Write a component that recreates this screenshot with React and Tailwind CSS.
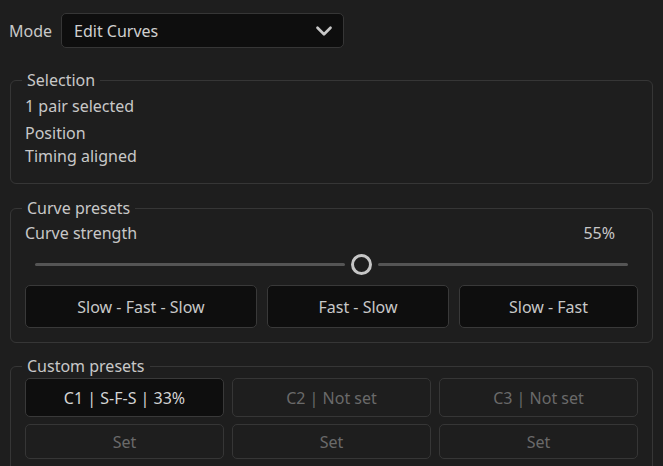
import { ChevronDown } from "lucide-react";

const font = { fontFamily: '"Noto Sans", "Liberation Sans", sans-serif' };

const Group = ({ title, className = "", children }) => (
  <fieldset
    className={`border border-[#363636] rounded-md mx-[10px] px-[14px] ${className}`}
  >
    <legend className="-ml-[3px] px-[5px] text-[16px] leading-[18px] text-[#c8c8c8]">
      {title}
    </legend>
    {children}
  </fieldset>
);

const PresetButton = ({ children, className = "" }) => (
  <button
    className={`h-[43px] rounded-[5px] border border-[#393939] bg-[#0e0e0e] text-[16px] text-[#c8c8c8] ${className}`}
  >
    {children}
  </button>
);

const SlotButton = ({ children, active, className = "" }) => (
  <button
    className={`rounded-[5px] border text-[16px] ${
      active
        ? "border-[#393939] bg-[#0e0e0e] text-[#d4d4d4]"
        : "border-[#363636] bg-[#1e1e1e] text-[#6a6a6a]"
    } ${className}`}
  >
    {children}
  </button>
);

export default function App() {
  const strength = 55;

  return (
    <div
      className="w-[663px] h-[466px] overflow-hidden bg-[#1e1e1e] text-[#c8c8c8]"
      style={font}
    >
      {/* Mode */}
      <div className="flex items-center gap-[9px] pl-[9px] pt-[13px]">
        <span className="text-[16px]">Mode</span>
        <button className="flex items-center justify-between w-[283px] h-[35px] pl-[12px] pr-[6px] rounded-[5px] border border-[#363636] bg-[#0e0e0e] text-[16px] text-[#d0d0d0]">
          <span>Edit Curves</span>
          <ChevronDown size={26} strokeWidth={2.5} className="text-[#c8c8c8]" />
        </button>
      </div>

      {/* Selection */}
      <Group title="Selection" className="mt-[23px] h-[113px]">
        <div className="text-[16px] leading-[22px] pt-[6px]">1 pair selected</div>
        <div className="text-[16px] leading-[22px] mt-[5px]">Position</div>
        <div className="text-[16px] leading-[22px] mt-[1px]">Timing aligned</div>
      </Group>

      {/* Curve presets */}
      <Group title="Curve presets" className="mt-[15px] h-[144px]">
        <div className="flex justify-between text-[16px] leading-[20px] pt-[6px] pr-[23px]">
          <span>Curve strength</span>
          <span>{strength}%</span>
        </div>
        <div className="flex items-center h-[22px] mt-[10px] px-[10px]">
          <div className="w-[310px] h-[3px] bg-[#555555] rounded-full" />
          <div className="mx-[6px] w-[21px] h-[21px] rounded-full border-[3px] border-[#c6c6c6] bg-[#1e1e1e]" />
          <div className="flex-1 h-[3px] bg-[#555555] rounded-full" />
        </div>
        <div className="flex gap-[10px] mt-[10px]">
          <PresetButton className="w-[232px]">Slow - Fast - Slow</PresetButton>
          <PresetButton className="w-[182px]">Fast - Slow</PresetButton>
          <PresetButton className="flex-1">Slow - Fast</PresetButton>
        </div>
      </Group>

      {/* Custom presets */}
      <Group title="Custom presets" className="mt-[14px] h-[120px]">
        <div className="grid grid-cols-3 gap-x-[8px] gap-y-[7px] mt-[3px]">
          <SlotButton active className="h-[39px]">C1 | S-F-S | 33%</SlotButton>
          <SlotButton className="h-[39px]">C2 | Not set</SlotButton>
          <SlotButton className="h-[39px]">C3 | Not set</SlotButton>
          <SlotButton className="h-[35px]">Set</SlotButton>
          <SlotButton className="h-[35px]">Set</SlotButton>
          <SlotButton className="h-[35px]">Set</SlotButton>
        </div>
      </Group>
    </div>
  );
}
